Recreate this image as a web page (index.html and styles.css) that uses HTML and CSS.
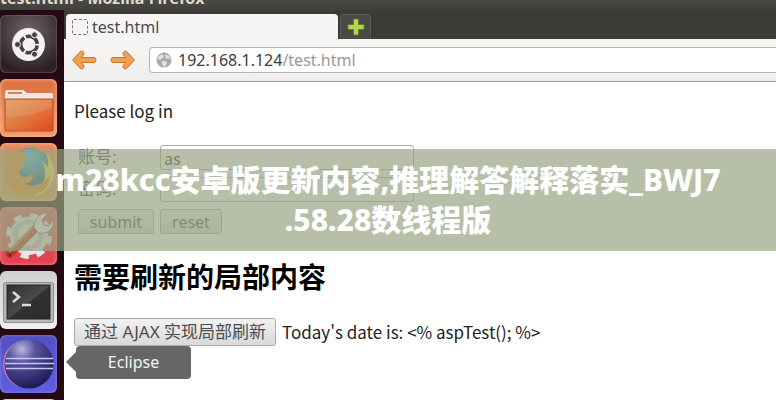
FILE: index.html
```html
<!DOCTYPE html>
<html lang="zh-CN">
<head>
    <meta charset="UTF-8">
    <meta name="viewport" content="width=device-width, initial-scale=1.0">
    <title>test.html - Mozilla Firefox</title>
    <link rel="stylesheet" href="styles.css">
</head>
<body>
    <div class="desktop">
        <header class="title-bar"><span>test.html - Mozilla Firefox</span></header>

        <div class="workspace">
            <nav class="launcher" aria-label="Launcher">
                <button class="tile dash" aria-label="Dash">
                    <svg viewBox="0 0 57 58">
                        <circle cx="28.5" cy="29.5" r="16.5" fill="#f3f1f1"/>
                        <circle cx="29" cy="29.500" r="8.300" fill="none" stroke="#4a4044" stroke-width="3.600" stroke-dasharray="15.400 2" stroke-dashoffset="-1"/>
                        <g fill="#4a4044" stroke="#f3f1f1" stroke-width="1">
                            <circle cx="17.500" cy="29.500" r="3"/>
                            <circle cx="34.500" cy="19.800" r="3"/>
                            <circle cx="34.500" cy="39.200" r="3"/>
                        </g>
                    </svg>
                </button>
                <button class="tile files" aria-label="Files">
                    <svg viewBox="0 0 57 58">
                        <defs>
                            <linearGradient id="folder" x1="0" y1="0" x2="1" y2="1">
                                <stop offset="0" stop-color="#d99a5e"/>
                                <stop offset=".5" stop-color="#e0793f"/>
                                <stop offset="1" stop-color="#e0481c"/>
                            </linearGradient>
                        </defs>
                        <path d="M5 13q0-2 2-2h16l4 3h24q2 0 2 2v36H5z" fill="#f1e7e0"/>
                        <path d="M8 14h14" stroke="#d98055" stroke-width="2"/>
                        <path d="M5 20h48v32H5z" fill="url(#folder)" stroke="#b8552c"/>
                        <path d="M6 38q22 0 46-9v-8H6z" fill="#fff" opacity=".12"/>
                    </svg>
                </button>
                <button class="tile firefox" aria-label="Firefox">
                    <svg viewBox="0 0 57 58">
                        <defs>
                            <radialGradient id="globe" cx=".5" cy=".2" r=".8">
                                <stop offset="0" stop-color="#4fc0e0"/>
                                <stop offset="1" stop-color="#12406e"/>
                            </radialGradient>
                        </defs>
                        <circle cx="30" cy="28" r="23" fill="url(#globe)"/>
                        <path d="M46 10q9 8 8 21-3 19-21 22 12-9 12-22 0-8-3-12 5 2 6 6 1-8-2-15z" fill="#f6dc50"/>
                        <path d="M7 17q2-7 6-11l2 5q4-3 9-3l2 6q-1 3-5 4 2 3 5 4-1 3-6 4-2 3 0 6 4 4 9 1 2-2 5-1-2 7-9 9 10 4 18-2 6-4 7-8 1 10-6 16-6 5-16 5Q8 50 5 34q-1-9 2-17z" fill="#ef8722"/>
                    </svg>
                </button>
                <button class="tile settings" aria-label="System Settings">
                    <svg viewBox="0 0 57 58">
                        <circle cx="29" cy="29" r="19" fill="#e6e6e6"/>
                        <circle cx="29" cy="29" r="20" fill="none" stroke="#e6e6e6" stroke-width="6" stroke-dasharray="8 7.700"/>
                        <circle cx="28" cy="28" r="13" fill="none" stroke="#c6c6c6" stroke-width="5"/>
                        <path d="M10 47l26-26" stroke="#b23a28" stroke-width="8" stroke-linecap="round"/>
                        <path d="M9 45l25-26" stroke="#dc6f55" stroke-width="2"/>
                        <path d="M34 21q0-8 5-12 4-4 9-3l-6 7 2 5 5 1 4-7q2 8-5 13-4 2-9 1z" fill="#eee" stroke="#777"/>
                        <circle cx="10" cy="48" r="1.500" fill="#762323"/>
                    </svg>
                </button>
                <button class="tile terminal" aria-label="Terminal">
                    <svg viewBox="0 0 57 58">
                        <defs>
                            <linearGradient id="screen" x1="0" y1="0" x2="1" y2="1">
                                <stop offset="0" stop-color="#303030"/>
                                <stop offset=".5" stop-color="#4b4b4b"/>
                                <stop offset=".52" stop-color="#303030"/>
                                <stop offset="1" stop-color="#2c2c2c"/>
                            </linearGradient>
                        </defs>
                        <rect x="3.500" y="11.500" width="50" height="40" rx="2" fill="#b8bab7" stroke="#8b8d8a"/>
                        <rect x="7" y="14" width="43" height="34" fill="url(#screen)" stroke="#222"/>
                        <path d="M13 21l6 5-6 5M22 34h9" fill="none" stroke="#ddd" stroke-width="2.500"/>
                    </svg>
                </button>
                <button class="tile eclipse" aria-label="Eclipse" aria-describedby="eclipse-tip">
                    <svg viewBox="0 0 57 58">
                        <defs>
                            <radialGradient id="moon" cx=".35" cy=".2" r=".8">
                                <stop offset="0" stop-color="#b9b6dc"/>
                                <stop offset=".35" stop-color="#5754a0"/>
                                <stop offset="1" stop-color="#1f1b55"/>
                            </radialGradient>
                        </defs>
                        <circle cx="27" cy="29" r="24" fill="#c37aa5"/>
                        <circle cx="29" cy="29" r="24.500" fill="url(#moon)"/>
                        <path d="M6 23.500h47M5 28.500h49M6 33.500h47" stroke="#c6c7ee" stroke-width="1.500"/>
                    </svg>
                    <span class="tooltip" id="eclipse-tip" role="tooltip">Eclipse</span>
                </button>
                <button class="tile terminal" aria-label="Workspaces"></button>
            </nav>

            <main class="browser">
                <div class="tab-strip">
                    <button class="tab"><span class="blank-icon"></span>test.html</button>
                    <button class="new-tab" aria-label="New tab">
                        <svg width="18" height="18" viewBox="0 0 18 18">
                            <path d="M6.500 1h5v5.500H17v5h-5.500V17h-5v-5.500H1v-5h5.500z" fill="#b4d64c" stroke="#617c24"/>
                        </svg>
                    </button>
                </div>
                <div class="toolbar">
                    <button class="nav-btn" aria-label="Back">
                        <svg width="26" height="22" viewBox="0 0 26 22">
                            <path d="M1.500 11l8-8.500q2-1 3 .5t0 3l-2.500 2.500h13q2 0 2 2.500t-2 2.500h-13l2.500 2.500q1 1.500 0 3t-3 .5z" fill="#f2a04d" stroke="#c9713a" stroke-linejoin="round"/>
                        </svg>
                    </button>
                    <button class="nav-btn" aria-label="Forward">
                        <svg width="26" height="22" viewBox="0 0 26 22">
                            <path d="M24.500 11l-8-8.500q-2-1-3 .5t0 3l2.500 2.500h-13q-2 0-2 2.500t2 2.500h13l-2.500 2.500q-1 1.500 0 3t3 .5z" fill="#f2a04d" stroke="#c9713a" stroke-linejoin="round"/>
                        </svg>
                    </button>
                    <a class="address" href="#">
                        <svg width="16" height="16" viewBox="0 0 16 16">
                            <circle cx="8" cy="8" r="7.500" fill="#a9a9a9"/>
                            <path d="M2 5l4-3 2 2-2 3-3 1zM9 2l4 2 2 4-3-2-2 1zM6 9l4 0 1 3-3 3-2-3z" fill="#e3e3e3"/>
                        </svg>
                        <span class="host">192.168.1.124<span class="path">/test.html</span></span>
                    </a>
                </div>

                <div class="page">
                    <p>Please log in</p>
                    <form class="login">
                        <label for="account">账号:</label>
                        <input type="text" id="account" value="as">
                        <label for="password">密码:</label>
                        <input type="password" id="password">
                        <button type="button">submit</button>
                        <button type="reset">reset</button>
                    </form>
                    <h2>需要刷新的局部内容</h2>
                    <div class="refresh">
                        <button type="button">通过 AJAX 实现局部刷新</button>
                        <span>Today's date is: &lt;% aspTest(); %&gt;</span>
                    </div>
                </div>
            </main>
        </div>

        <div class="banner">m28kcc安卓版更新内容,推理解答解释落实_BWJ7<br>.58.28数线程版</div>
    </div>
</body>
</html>
```
FILE: styles.css
```css
* {
    box-sizing: border-box;
}
body {
    margin: 0;
    font-family: "Noto Sans", "Noto Sans CJK SC", sans-serif;
    font-size: 16px;
    color: #222;
}
button {
    font: inherit;
    padding: 0;
    border: none;
    cursor: pointer;
}
.desktop {
    position: relative;
    display: flex;
    flex-direction: column;
    height: 100vh;
    overflow: hidden;
    background-color: #3c3b37;
}
.title-bar {
    display: flex;
    align-items: flex-end;
    flex-shrink: 0;
    height: 10px;
    padding-bottom: 2px;
    overflow: hidden;
    background: linear-gradient(#4a4943, #403f3a);
    color: #dfdbd2;
    font-family: "Open Sans", sans-serif;
    font-size: 16px;
    font-weight: bold;
    line-height: 20px;
    white-space: nowrap;
}
.workspace {
    display: flex;
    flex: 1;
    min-height: 0;
}

/* launcher */
.launcher {
    display: flex;
    flex-direction: column;
    gap: 6px;
    flex-shrink: 0;
    width: 64px;
    padding-top: 5px;
    background-color: #260a12;
}
.tile {
    position: relative;
    flex-shrink: 0;
    width: 57px;
    height: 58px;
    border-radius: 6px;
}
.tile svg {
    display: block;
}
.dash {
    background: radial-gradient(circle at 50% 30%, #75686c, #2d2024 80%);
    box-shadow: inset 0 0 2px #9b8c90;
}
.files {
    background: linear-gradient(#d96f3f, #f39a68);
    box-shadow: inset 0 0 4px #ffc09a;
}
.firefox {
    background: linear-gradient(#e5865a, #dfa04a);
    box-shadow: inset 0 0 4px #ffc09a;
}
.settings {
    background: linear-gradient(#d66060, #e2404e);
    box-shadow: inset 0 0 4px #f58b8b;
}
.terminal {
    background: linear-gradient(#cfcfcf, #f0f0f0);
}
.eclipse {
    background: linear-gradient(#5350c4, #5f5ee0);
    box-shadow: inset 0 0 3px #8f8df0;
}
.tooltip {
    position: absolute;
    z-index: 1;
    left: 76px;
    top: 11px;
    width: 115px;
    border-radius: 4px;
    background-color: #666;
    color: #f4f4f4;
    line-height: 33px;
    text-align: center;
}
.tooltip::before {
    content: "";
    position: absolute;
    left: -10px;
    top: 6px;
    border: 10px solid transparent;
    border-left: none;
    border-right-color: #666;
}

/* browser chrome */
.browser {
    display: flex;
    flex-direction: column;
    flex: 1;
    min-width: 0;
    background-color: #fff;
}
.tab-strip {
    display: flex;
    align-items: flex-end;
    gap: 2px;
    height: 29px;
    padding-left: 2px;
    background-color: #3c3b37;
}
.tab {
    display: flex;
    align-items: center;
    gap: 4px;
    width: 272px;
    height: 25px;
    padding-left: 6px;
    border-radius: 4px 4px 0 0;
    background-color: #f6f5f4;
    color: #4c4c4c;
}
.blank-icon {
    width: 16px;
    height: 16px;
    border: 1px dashed #777;
    border-radius: 2px;
}
.new-tab {
    display: flex;
    align-items: center;
    justify-content: center;
    width: 31px;
    height: 25px;
    border: 1px solid #5a5954;
    border-bottom: none;
    border-radius: 4px 4px 0 0;
    background-color: #4a4945;
}
.toolbar {
    display: flex;
    align-items: center;
    gap: 13px;
    height: 43px;
    padding-left: 7px;
    border-bottom: 1px solid #999;
    background: linear-gradient(#f6f5f4, #efeeed);
}
.nav-btn {
    display: flex;
    background: none;
}
.address {
    display: flex;
    flex: 1;
    align-items: center;
    gap: 6px;
    height: 26px;
    padding-left: 6px;
    border: 1px solid #b4b4b4;
    border-right: none;
    border-radius: 4px 0 0 4px;
    background-color: #fff;
    color: #3c3c3c;
    text-decoration: none;
}
.path {
    color: #999;
}

/* page */
.page {
    padding: 17px 10px;
    font-family: "Noto Sans CJK SC", sans-serif;
    font-size: 17px;
    line-height: 24px;
}
.page p {
    margin: 0;
}
.page button {
    border: 1px solid #aaa;
    border-radius: 3px;
    background: linear-gradient(#f2f2f2, #d9d9d9);
    color: #4c4c4c;
    font-family: "Noto Sans", "Noto Sans CJK SC", sans-serif;
}
.login {
    display: grid;
    grid-template-columns: 76px 62px 186px;
    gap: 7px 6px;
    padding: 22px 4px 0;
    color: #444;
}
.login label {
    line-height: 22px;
}
.login input {
    grid-column: 2 / 4;
    height: 25px;
    padding: 0 3px;
    border: 1px solid #aaa;
    border-radius: 3px;
    font: inherit;
    font-size: 16px;
    line-height: 22px;
    color: #333;
}
.login button {
    height: 25px;
    font-size: 16px;
    line-height: 22px;
}
.page h2 {
    margin: 0;
    padding: 23px 0;
    color: #000;
    font-size: 28px;
    line-height: 38px;
}
.refresh {
    display: flex;
    align-items: center;
    gap: 6px;
    white-space: nowrap;
}
.refresh button {
    height: 28px;
    padding: 0 9px;
}

.banner {
    position: absolute;
    z-index: 2;
    top: 149px;
    left: 0;
    right: 0;
    padding: 11px 50px;
    background-color: rgba(154, 164, 131, 0.7);
    color: #fff;
    font-size: 30px;
    font-weight: 800;
    line-height: 40px;
    text-align: center;
    word-break: break-all;
}
```
